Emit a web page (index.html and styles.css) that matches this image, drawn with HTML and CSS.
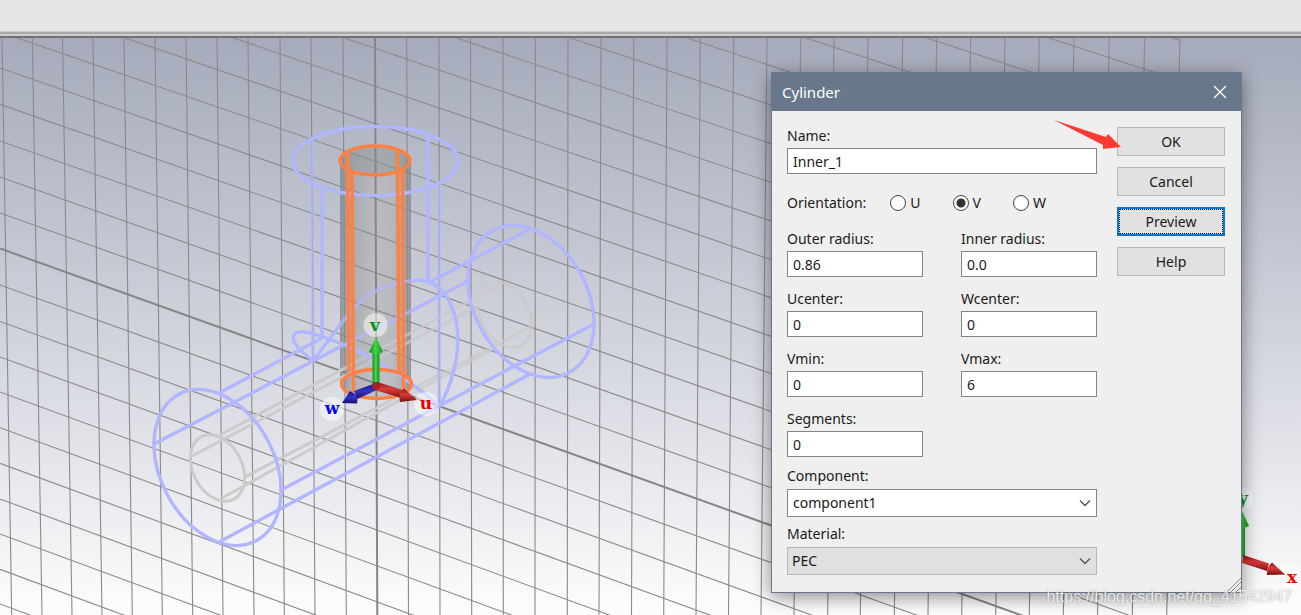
FILE: index.html
```html
<!DOCTYPE html>
<html lang="en">
<head>
<meta charset="utf-8">
<title>Cylinder</title>
<link rel="stylesheet" href="styles.css">
</head>
<body>
<div class="app">
  <header class="toolbar"></header>
  <main class="viewport">
    <svg class="scene" viewBox="0 38 1301 577" preserveAspectRatio="xMinYMin slice" role="img" aria-label="3D model view">
      <defs>
        <linearGradient id="tube">
          <stop offset="0" stop-color="#808286" stop-opacity=".75"/>
          <stop offset=".08" stop-color="#8c8e92" stop-opacity=".7"/>
          <stop offset=".2" stop-color="#a2a3a6" stop-opacity=".7"/>
          <stop offset=".5" stop-color="#b8b9bb" stop-opacity=".75"/>
          <stop offset=".75" stop-color="#b2b3b5" stop-opacity=".75"/>
          <stop offset=".92" stop-color="#929396" stop-opacity=".7"/>
          <stop offset="1" stop-color="#808286" stop-opacity=".75"/>
        </linearGradient>
        <linearGradient id="green"><stop offset="0" stop-color="#168a1c"/><stop offset=".45" stop-color="#3fd84a"/><stop offset="1" stop-color="#1b8f20"/></linearGradient>
        <linearGradient id="red" x2="0" y2="1"><stop offset="0" stop-color="#8e1515"/><stop offset=".45" stop-color="#dc3a3a"/><stop offset="1" stop-color="#7a1010"/></linearGradient>
        <linearGradient id="blue" x2="0" y2="1"><stop offset="0" stop-color="#14147a"/><stop offset=".5" stop-color="#3434c8"/><stop offset="1" stop-color="#10106a"/></linearGradient>
      </defs>

      <path class="tube" d="M340 161A36 15 0 0 1 411 161V385A36 15 0 0 1 340 385Z"/>
      <ellipse class="tube-cap" cx="375" cy="160.500" rx="35" ry="14.500"/>

      <g class="grid">
        <path d="M2 37L11.7 615M32.3 37L42 615M62.5 37L72 615M93 37L102 615M124 37L132.3 615M155 37L162.3 615M186 37L192.7 615M217 37L223 615M248 37L254 615M280 37L284.3 615M311 37L315 615M343 37L346.3 615M406.7 37L408.5 615M439 37L440 615M470.5 37L471.7 615M503 37L503.3 615M535.3 37L535 615M568 37L567.3 615M601 37L599 615M633.7 37L631.5 615M667 37L663.7 615M700.3 37L696 615M733.7 37L728.5 615M767 37L761 615M800.7 37L794 615M834 37L827.7 615M868 37L860.3 615M902.7 37L894.3 615M936.7 37L928 615M970.7 37L961.7 615M1005 37L995.7 615M1039.3 37L1029.3 615M1074 37L1063.3 615M1109.3 37L1097.5 615M1144.7 37L1132.3 615M1180 37L1166.7 615"/>
        <path d="M0 -342L1180 40.4M0 -304L1180 80.7M0 -266L1180 121M0 -228L1180 161.3M0 -190.5L1180 201.8M0 -153L1180 241.9M0 -115.5L1180 281.1M0 -78.5L1180 320.7M0 -41.5L1180 360.3M0 -5L1180 400M0 32L1180 438.6M0 68L1180 478.7M0 104.3L1180 516.5M0 141L1180 554.8M0 177L1180 594.3M0 213L1180 633.4M0 285L1180 710M0 321.5L1180 748.3M0 357L1180 786M0 392L1180 824M0 427.7L1180 860M0 463.3L1180 897M0 499L1180 933M0 534L1180 969M0 569.3L1180 1006M0 604L1180 1042"/>
        <path class="main-line" d="M375 37L377.3 615M0 248.5L1180 672.2"/>
      </g>

      <g class="inner-wire">
        <ellipse cx="217.5" cy="468" rx="35.2" ry="24.5" transform="rotate(62.4 217.5 468)"/>
        <path d="M220 435L345 368M192 456L345 375.500M245 477L400 395.500M222 498L400 400"/>
        <g class="faint">
          <ellipse cx="504.700" cy="314.700" rx="35" ry="24.500" transform="rotate(62 504.700 314.700)"/>
          <path d="M345 368L500 285M345 375.500L478 306M400 395.500L532 326M400 400L495 348"/>
        </g>
      </g>

      <g class="outer-wire">
        <ellipse cx="375.500" cy="161" rx="82.500" ry="34.500"/>
        <path d="M322 187V338M428 135V283"/>
        <path class="soft" d="M312 139L313 361M439 183V405"/>
        <ellipse cx="217.5" cy="467.5" rx="82.800" ry="57.100" transform="rotate(62.4 217.5 467.5)"/>
        <ellipse cx="531" cy="301.5" rx="80.600" ry="56.900" transform="rotate(61.8 531 301.5)"/>
        <path d="M219 393L322 338M154 444L340 347M411 311L470 280M428 283L530 229M281 490L439 406L594 324M220 541.500L532 373"/>
        <path d="M313 361C320 352 330 338 340 325M411 281C420 279 430 281 437 286C451 298 457 318 458 337C458 360 451 385 440 406"/>
        <path d="M313 361C300 351 292 342 293.500 336C296 329 310 332 323 337C364 350 400 373 440 406"/>
        <path class="soft" d="M340 347L411 311M340 325C350 311 360 301 370 294C382 287 397 282 411 281"/>
      </g>

      <g class="selection">
        <ellipse cx="375" cy="160.500" rx="35" ry="14.500"/>
        <ellipse cx="376.500" cy="384" rx="35" ry="14.500"/>
        <path d="M347.500 152L349 372M352 171L353.500 392M397.500 150L399 372M402.500 170L403.500 391"/>
      </g>

      <g class="halo">
        <circle cx="375.500" cy="325" r="12"/><circle cx="426" cy="404" r="12"/><circle cx="332" cy="409" r="12"/>
        <circle cx="1241" cy="499" r="12"/><circle cx="1291" cy="577" r="12"/>
      </g>
      <g class="axes">
        <path fill="url(#green)" d="M372.500 350H379.500V386H372.500Z"/>
        <path fill="url(#green)" d="M376 337L383 352Q376 356 369 352Z"/>
        <path fill="url(#red)" d="M377 382L403 390L401 398L375 390Z"/>
        <path fill="url(#red)" d="M404 388.500L417 400L400 402Q398 394 404 388.500Z"/>
        <path fill="url(#blue)" d="M376 383L354 391L357 399L377 390Z"/>
        <path fill="url(#blue)" d="M350 391L342 403L357 403.500Q359 395 350 391Z"/>
        <circle cx="376" cy="386" r="4" fill="#a82028"/>
        <path fill="url(#green)" d="M1239 525H1245V557H1239Z"/>
        <path fill="url(#green)" d="M1241.500 510L1249 526Q1242 530 1235 526Z"/>
        <path fill="url(#red)" d="M1243 555L1269 563.500L1267 571L1242 563Z"/>
        <path fill="url(#red)" d="M1272 562.500L1285 574.500L1267 575Q1266 568 1272 562.500Z"/>
      </g>
      <g class="axis-label">
        <text x="375" y="331" fill="#00960a">v</text>
        <text x="426" y="409" fill="#e80000">u</text>
        <text x="332" y="414" fill="#0000f0">w</text>
        <text x="1243" y="504" fill="#00960a">y</text>
        <text x="1292" y="583" fill="#f80000">x</text>
      </g>
    </svg>
  </main>

  <form class="dialog" role="dialog" aria-labelledby="dialog-title">
    <div class="titlebar">
      <h1 class="title" id="dialog-title">Cylinder</h1>
      <button class="close" type="button" aria-label="Close">
        <svg width="14" height="14" viewBox="0 0 14 14"><path d="M1 1L13 13M13 1L1 13"/></svg>
      </button>
    </div>
    <div class="body">
      <div class="fields">
        <div class="field">
          <label for="name">Name:</label>
          <input id="name" type="text" value="Inner_1">
        </div>
        <div class="orientation" role="radiogroup" aria-labelledby="orient">
          <span class="orient-label" id="orient">Orientation:</span>
          <label class="option"><input type="radio" name="axis">U</label>
          <label class="option"><input type="radio" name="axis" checked>V</label>
          <label class="option"><input type="radio" name="axis">W</label>
        </div>
        <div class="params">
          <div class="field"><label for="outer">Outer radius:</label><input id="outer" type="text" value="0.86"></div>
          <div class="field"><label for="inner">Inner radius:</label><input id="inner" type="text" value="0.0"></div>
          <div class="field"><label for="uc">Ucenter:</label><input id="uc" type="text" value="0"></div>
          <div class="field"><label for="wc">Wcenter:</label><input id="wc" type="text" value="0"></div>
          <div class="field"><label for="vmin">Vmin:</label><input id="vmin" type="text" value="0"></div>
          <div class="field"><label for="vmax">Vmax:</label><input id="vmax" type="text" value="6"></div>
          <div class="field"><label for="seg">Segments:</label><input id="seg" type="text" value="0"></div>
        </div>
        <div class="combos">
          <div class="field combo-field">
            <label for="component">Component:</label>
            <div class="combo">
              <select id="component"><option>component1</option></select>
              <svg width="12" height="8" viewBox="0 0 12 8"><path d="M1 1.500L6 6.500L11 1.500"/></svg>
            </div>
          </div>
          <div class="field combo-field">
            <label for="material">Material:</label>
            <div class="combo">
              <select id="material" class="flat"><option>PEC</option></select>
              <svg width="12" height="8" viewBox="0 0 12 8"><path d="M1 1.500L6 6.500L11 1.500"/></svg>
            </div>
          </div>
        </div>
      </div>
      <div class="actions">
        <button class="btn" type="button">OK</button>
        <button class="btn" type="button">Cancel</button>
        <button class="btn active" type="button"><span>Preview</span></button>
        <button class="btn" type="button">Help</button>
      </div>
    </div>
    <svg class="pointer" width="70" height="32" viewBox="0 0 70 32"><path d="M1 1L53 18L55 15L68 28L50 30V26Z"/></svg>
    <svg class="grip" width="14" height="14" viewBox="0 0 14 14"><path d="M0 14L14 0M4 14L14 4M9 14L14 9"/></svg>
  </form>
  <div class="watermark">https://blog.csdn.net/qq_41542947</div>
</div>
</body>
</html>
```
FILE: styles.css
```css
* { box-sizing: border-box; }

body {
  margin: 0;
  font: 14px/18px "Noto Sans", sans-serif;
  color: #1a1a1a;
}

.app {
  position: relative;
  display: flex;
  flex-direction: column;
  height: 100vh;
  overflow: hidden;
}

.toolbar {
  flex: none;
  height: 38px;
  background: linear-gradient(#e6e6e6 31px, #cdcdcd 31px 32px, #aaa 32px 34px, #cdcdcd 34px 36px, #707070 36px);
}

.viewport {
  flex: 1;
  min-height: 0;
  background: linear-gradient(#a5abbb, #ced0da 48%, #fdfdfd);
}

.scene { display: block; width: 100%; height: 100%; }
.grid, .inner-wire, .outer-wire, .selection { fill: none; }
.grid { stroke: #8a8a8a; stroke-width: 1.1; }
.grid .main-line { stroke: #868686; stroke-width: 2; }
.inner-wire { stroke: #cbcbcb; stroke-width: 3; }
.faint { stroke: #cacac8; opacity: .7; }
.outer-wire { stroke: #b0b6ff; stroke-width: 3.4; }
.outer-wire .soft { opacity: .7; }
.tube { fill: url(#tube); }
.tube-cap { fill: #94979c; fill-opacity: .5; }
.selection { stroke: #ff8040; stroke-width: 3.4; }
.halo { fill: #fff; fill-opacity: .5; }
.axis-label {
  font: bold 17px "DejaVu Serif", serif;
  text-anchor: middle;
}

.dialog {
  position: absolute;
  top: 72px;
  right: 59px;
  width: 471px;
  background: #efefef;
  border: 1px solid #68778b;
  box-shadow: 0 4px 18px rgba(0, 0, 0, .45);
}

.titlebar {
  display: flex;
  align-items: center;
  justify-content: space-between;
  height: 38px;
  padding: 0 14px 0 10px;
  background: #68778b;
  color: #fff;
}

.title { margin: 0; font: 15px/20px "Noto Sans", sans-serif; }
.close { display: flex; padding: 0; border: 0; background: none; }
.close path { fill: none; stroke: #fff; stroke-width: 1.3; }

.body {
  display: flex;
  justify-content: space-between;
  padding: 16px 16px 17px 15px;
}

.fields { width: 310px; }
.field { display: flex; flex-direction: column; gap: 3px; }

.field input {
  width: 100%;
  height: 26px;
  padding: 0 5px;
  border: 1px solid #858585;
  background: #fff;
  font: inherit;
  color: inherit;
}

.orientation {
  display: flex;
  align-items: center;
  gap: 32px;
  height: 20px;
  margin: 19px 0 17px;
}

.orient-label { margin-right: -8px; }
.option { display: flex; align-items: center; gap: 4px; }

.option input {
  appearance: none;
  width: 16px;
  height: 16px;
  margin: 0;
  border: 1px solid #444;
  border-radius: 50%;
  background: #fff;
}

.option input:checked { background: radial-gradient(circle, #333 4px, #fff 5px); }

.params {
  display: grid;
  grid-template-columns: 136px 136px;
  gap: 13px 38px;
}

.combos { display: flex; flex-direction: column; gap: 8px; margin-top: 10px; }
.combo-field { gap: 4px; }
.combo { display: grid; align-items: center; }
.combo select, .combo svg { grid-area: 1 / 1; }

.combo select {
  appearance: none;
  width: 100%;
  height: 28px;
  padding: 0 5px;
  border: 1px solid #858585;
  border-radius: 0;
  background: #fff;
  font: inherit;
  color: inherit;
}

.combo .flat { padding: 0 4px; border-color: #b8b8b8; background: #e0e0e0; }
.combo svg { justify-self: end; margin-right: 6px; pointer-events: none; }
.combo path { fill: none; stroke: #555; stroke-width: 1.4; }

.actions { display: flex; flex-direction: column; gap: 11px; width: 108px; }

.btn {
  height: 29px;
  padding: 0;
  border: 1px solid #b8b8b8;
  background: #e1e1e1;
  font: inherit;
  color: inherit;
}

.btn.active { padding: 0; border: 2px solid #0078d7; }
.btn.active span { display: grid; place-items: center; height: 100%; border: 1px dotted #111; }

.pointer { position: absolute; left: 281px; top: 46px; fill: #ff3b30; }
.grip { position: absolute; right: 0; bottom: 0; fill: none; stroke: #888; }

.watermark {
  position: absolute;
  right: 9px;
  bottom: 8px;
  font: 16px/20px "Liberation Sans", sans-serif;
  color: rgba(255, 255, 255, .8);
  text-shadow: 0 0 2px rgba(0, 0, 0, .35);
}
```
